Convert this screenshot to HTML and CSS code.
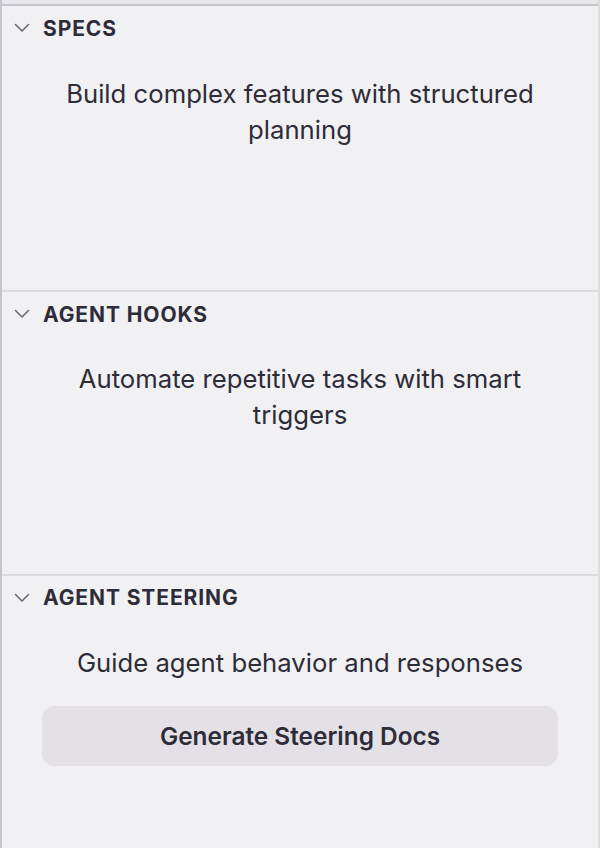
FILE: index.html
```html
<!DOCTYPE html>
<html>
<head>
<meta charset="utf-8">
<link rel="stylesheet" href="styles.css">
</head>
<body>
<div class="panel">
  <div class="topstrip"></div>
  <section class="section fixed">
    <div class="head">
      <svg class="chev" viewBox="0 0 16 10" width="16" height="10"><path d="M1.5 1.5 L8 8 L14.5 1.5" fill="none" stroke="#6b6a75" stroke-width="1.6" stroke-linecap="round" stroke-linejoin="round"/></svg>
      <span class="title">SPECS</span>
    </div>
    <p class="desc">Build complex features with structured planning</p>
  </section>
  <section class="section fixed second">
    <div class="head">
      <svg class="chev" viewBox="0 0 16 10" width="16" height="10"><path d="M1.5 1.5 L8 8 L14.5 1.5" fill="none" stroke="#6b6a75" stroke-width="1.6" stroke-linecap="round" stroke-linejoin="round"/></svg>
      <span class="title">AGENT HOOKS</span>
    </div>
    <p class="desc">Automate repetitive tasks with smart triggers</p>
  </section>
  <section class="section last">
    <div class="head">
      <svg class="chev" viewBox="0 0 16 10" width="16" height="10"><path d="M1.5 1.5 L8 8 L14.5 1.5" fill="none" stroke="#6b6a75" stroke-width="1.6" stroke-linecap="round" stroke-linejoin="round"/></svg>
      <span class="title">AGENT STEERING</span>
    </div>
    <p class="desc">Guide agent behavior and responses</p>
    <button class="btn">Generate Steering Docs</button>
  </section>
</div>
</body>
</html>
```
FILE: styles.css
```css
html, body {
  margin: 0;
  padding: 0;
  background: #f1f1f3;
}
body {
  font-family: Inter, "Noto Sans", sans-serif;
  color: #2e2c39;
}
.panel {
  width: 600px;
  height: 848px;
  box-sizing: border-box;
  border-left: 2px solid #c6c5cc;
  border-right: 2px solid #dddce1;
  display: flex;
  flex-direction: column;
  overflow: hidden;
}
.topstrip {
  height: 4px;
  background: #e8e7eb;
  border-bottom: 2px solid #c6c5cc;
  flex: none;
  margin-left: -2px;
  margin-right: -2px;
}
.section {
  display: flex;
  flex-direction: column;
  align-items: center;
}
.section.fixed {
  height: 284px;
  border-bottom: 2px solid #dcdbe0;
  flex: none;
}
.section.second {
  height: 282px;
}
.section.second .desc {
  margin-top: 25px;
}
.section.last {
  flex: 1;
}
.head {
  align-self: stretch;
  height: 44px;
  display: flex;
  align-items: center;
  padding-left: 12px;
  gap: 13px;
}
.section.last .head {
  height: 43px;
}
.chev {
  display: block;
  flex: none;
}
.title {
  font-weight: 700;
  font-size: 21px;
  letter-spacing: 0.9px;
  color: #2e2c39;
}
.desc {
  margin: 26px 0 0;
  padding: 0 40px;
  text-align: center;
  font-size: 25.7px;
  line-height: 36px;
  color: #2e2c39;
}
.btn {
  margin-top: 25px;
  width: 516px;
  height: 60px;
  border: none;
  border-radius: 12px;
  background: #e3e1e6;
  font-family: Inter, "Noto Sans", sans-serif;
  font-weight: 600;
  font-size: 24.4px;
  color: #2e2c39;
  cursor: pointer;
}
```
